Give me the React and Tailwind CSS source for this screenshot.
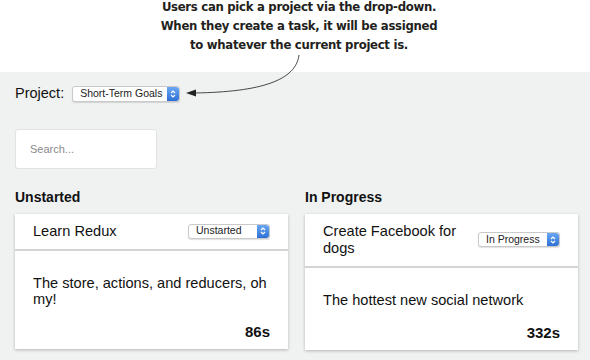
import React from 'react';

const sans = { fontFamily: '"Helvetica Neue", "Liberation Sans", Arial, sans-serif' };

function Stepper() {
  return (
    <span className="flex h-full w-[12px] items-center justify-center rounded-r-[3px] bg-gradient-to-b from-[#6aa8f4] to-[#2d6fd6]">
      <svg width="6" height="10" viewBox="0 0 6 10" fill="none" stroke="white" strokeWidth="1.2">
        <path d="M1 4 L3 2 L5 4" />
        <path d="M1 6 L3 8 L5 6" />
      </svg>
    </span>
  );
}

function Select({ label, className }) {
  return (
    <div className={`flex items-center rounded-[3px] border border-[#c9c9c9] bg-white shadow-[0_1px_1px_rgba(0,0,0,0.12)] ${className}`}>
      <span className="flex-1 pl-[7px] text-[10.5px] text-[#222]">{label}</span>
      <Stepper />
    </div>
  );
}

function TaskCard({ title, status, description, timer }) {
  return (
    <div className="bg-white shadow-[0_1px_3px_rgba(0,0,0,0.25)]">
      <div className="flex items-center justify-between border-b-2 border-[#d4d4d4] px-[18px] py-[9px]">
        <div className="min-w-0 flex-1 pr-[10px] text-[14.6px] leading-[17px] text-[#111]">{title}</div>
        <Select label={status} className="h-[15px] w-[82px]" />
      </div>
      <div className="px-[18px] pt-[24px] pb-[9px]">
        <p className="text-[14.6px] leading-[16px] text-[#111]">{description}</p>
        <p className="mt-[16px] text-right text-[15px] font-bold leading-[17px] text-[#111]">{timer}</p>
      </div>
    </div>
  );
}

export default function App() {
  return (
    <div className="relative h-[360px] w-[590px] overflow-hidden bg-white" style={sans}>
      {/* callout */}
      <div className="flex h-[72px] justify-center pl-[8px]">
        <p
          className="mt-[-3px] text-center text-[13px] font-bold leading-[19px] text-[#231f20]"
          style={{ fontFamily: '"DejaVu Sans Condensed", "Open Sans", sans-serif', fontStretch: 'condensed', letterSpacing: '-0.3px' }}
        >
          Users can pick a project via the drop-down.
          <br />
          When they create a task, it will be assigned
          <br />
          to whatever the current project is.
        </p>
      </div>

      <div className="h-[288px] bg-[#f0f1f1] pl-[15px] pr-[12px]">
        <div className="flex items-center pt-[11px]">
          <span className="text-[14.5px] text-[#111]">Project:</span>
          <Select label="Short-Term Goals" className="ml-[8px] h-[16px] w-[108px]" />
        </div>

        <div className="mt-[24px] flex h-[40px] w-[142px] items-center rounded-[3px] border border-[#e2e2e2] bg-white pl-[14px] text-[11px] text-[#8a8a8a]">
          Search...
        </div>

        <div className="mt-[20px] grid grid-cols-2 gap-[17px]">
          <div>
            <h2 className="mb-[8px] text-[14px] font-bold leading-[17px] text-[#111]">Unstarted</h2>
            <TaskCard
              title="Learn Redux"
              status="Unstarted"
              description="The store, actions, and reducers, oh my!"
              timer="86s"
            />
          </div>
          <div>
            <h2 className="mb-[8px] text-[14px] font-bold leading-[17px] text-[#111]">In Progress</h2>
            <TaskCard
              title="Create Facebook for dogs"
              status="In Progress"
              description="The hottest new social network"
              timer="332s"
            />
          </div>
        </div>
      </div>

      {/* pointer arrow */}
      <svg className="pointer-events-none absolute left-0 top-0" width="590" height="360" fill="none">
        <path d="M299 55 C 296 80, 262 92, 194 93" stroke="#333" strokeWidth="0.9" />
        <path d="M186 93 L196 89.5 L196 96.5 Z" fill="#222" />
      </svg>
    </div>
  );
}
